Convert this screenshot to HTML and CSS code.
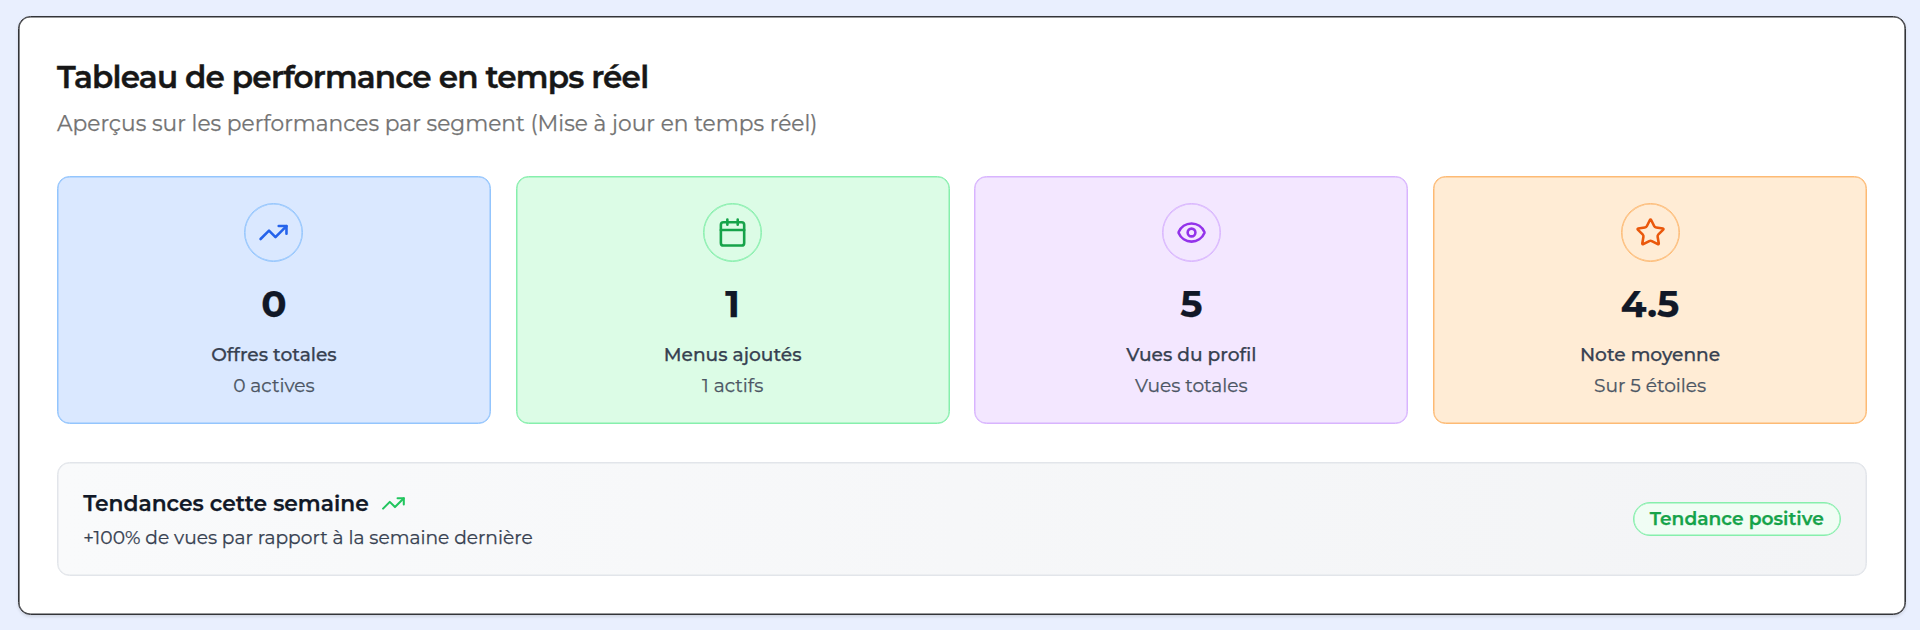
FILE: index.html
```
<!DOCTYPE html>
<html lang="fr">
<head>
<meta charset="utf-8">
<title>Tableau de performance</title>
<link rel="stylesheet" href="styles.css">
</head>
<body>
<main class="panel">
  <header class="panel-header">
    <h1 class="panel-title">Tableau de performance en temps réel</h1>
    <p class="panel-subtitle">Aperçus sur les performances par segment (Mise à jour en temps réel)</p>
  </header>

  <section class="stats">
    <article class="stat stat-blue">
      <span class="stat-icon">
        <svg class="icon" viewBox="0 0 24 24"><polyline points="22 7 13.5 15.5 8.5 10.5 2 17"/><polyline points="16 7 22 7 22 13"/></svg>
      </span>
      <strong class="stat-value">0</strong>
      <span class="stat-label">Offres totales</span>
      <span class="stat-note">0 actives</span>
    </article>
    <article class="stat stat-green">
      <span class="stat-icon">
        <svg class="icon" viewBox="0 0 24 24"><path d="M8 2v4M16 2v4"/><rect x="3" y="4" width="18" height="18" rx="2"/><path d="M3 10h18"/></svg>
      </span>
      <strong class="stat-value">1</strong>
      <span class="stat-label">Menus ajoutés</span>
      <span class="stat-note">1 actifs</span>
    </article>
    <article class="stat stat-purple">
      <span class="stat-icon">
        <svg class="icon" viewBox="0 0 24 24"><path d="M2.062 12.348a1 1 0 0 1 0-.696 10.75 10.75 0 0 1 19.876 0 1 1 0 0 1 0 .696 10.75 10.75 0 0 1-19.876 0"/><circle cx="12" cy="12" r="3"/></svg>
      </span>
      <strong class="stat-value">5</strong>
      <span class="stat-label">Vues du profil</span>
      <span class="stat-note">Vues totales</span>
    </article>
    <article class="stat stat-orange">
      <span class="stat-icon">
        <svg class="icon" viewBox="0 0 24 24"><path d="M11.525 2.295a.53.53 0 0 1 .95 0l2.31 4.679a2.123 2.123 0 0 0 1.595 1.16l5.166.756a.53.53 0 0 1 .294.904l-3.736 3.638a2.123 2.123 0 0 0-.611 1.878l.882 5.14a.53.53 0 0 1-.771.56l-4.618-2.428a2.122 2.122 0 0 0-1.973 0L6.396 21.01a.53.53 0 0 1-.77-.56l.881-5.139a2.122 2.122 0 0 0-.611-1.879L2.16 9.795a.53.53 0 0 1 .294-.906l5.165-.755a2.122 2.122 0 0 0 1.597-1.16z"/></svg>
      </span>
      <strong class="stat-value">4.5</strong>
      <span class="stat-label">Note moyenne</span>
      <span class="stat-note">Sur 5 étoiles</span>
    </article>
  </section>

  <section class="trend">
    <div class="trend-text">
      <h2 class="trend-title">Tendances cette semaine
        <svg class="icon icon-small" viewBox="0 0 24 24"><polyline points="22 7 13.5 15.5 8.5 10.5 2 17"/><polyline points="16 7 22 7 22 13"/></svg>
      </h2>
      <p class="trend-note">+100% de vues par rapport à la semaine dernière</p>
    </div>
    <span class="badge">Tendance positive</span>
  </section>
</main>
</body>
</html>
```
FILE: styles.css
```
* { box-sizing: border-box; margin: 0; }

body {
  height: 630px;
  padding: 16px 14px 15px 18px;
  overflow: hidden;
  background: #e9effe;
  font-family: Montserrat, Inter, sans-serif;
  -webkit-text-stroke: 0.25px currentColor;
}

.panel {
  height: 599px;
  padding: 38px 38px 0;
  border: 1px solid #333438;
  border-radius: 12.4px;
  background: #fff;
  box-shadow: inset 0 0 0 0.6px #333438, 0 1.5px 3px rgba(0, 0, 0, 0.1);
}

.panel-title {
  line-height: 44px;
  font-size: 31.07px;
  font-weight: 600;
  letter-spacing: -0.8px;
  color: #171717;
  -webkit-text-stroke-width: 0.4px;
}

.panel-subtitle {
  margin-top: 8px;
  line-height: 33px;
  font-size: 21.73px;
  color: #737373;
}

.stats {
  display: grid;
  grid-template-columns: repeat(4, 1fr);
  gap: 24.86px;
  margin-top: 36px;
}

.stat {
  display: flex;
  flex-direction: column;
  align-items: center;
  height: 248px;
  padding-top: 25.6px;
  border: 1px solid var(--line);
  border-radius: 12.4px;
  background: var(--fill);
  box-shadow: inset 0 0 0 0.5px var(--line);
}

.stat-blue { --fill: #dae8ff; --line: #93c5fd; --ink: #2563eb; }
.stat-green { --fill: #dcfce6; --line: #86efac; --ink: #16a34a; }
.stat-purple { --fill: #f3e7ff; --line: #d8b4fe; --ink: #9333ea; }
.stat-orange { --fill: #ffecd5; --line: #fdba74; --ink: #ea580c; }

.stat-icon {
  display: grid;
  place-items: center;
  width: 59px;
  height: 59px;
  border: 1px solid var(--line);
  border-radius: 50%;
  box-shadow: inset 0 0 0 0.5px var(--line);
  color: var(--ink);
}

.icon {
  display: block;
  width: 31.07px;
  height: 31.07px;
  fill: none;
  stroke: currentColor;
  stroke-width: 2;
  stroke-linecap: round;
  stroke-linejoin: round;
}

.stat-value {
  margin-top: 19.4px;
  line-height: 46px;
  font-size: 37.3px;
  font-weight: 700;
  color: #111827;
}

.stat-label {
  margin-top: 13.4px;
  line-height: 30px;
  font-size: 18.64px;
  font-weight: 500;
  color: #374151;
}

.stat-note {
  line-height: 31px;
  font-size: 18.64px;
  color: #4b5563;
}

.trend {
  display: flex;
  align-items: center;
  justify-content: space-between;
  height: 114.4px;
  margin-top: 37.6px;
  padding: 0 25.2px;
  border: 1px solid #e2e5ea;
  border-radius: 12.4px;
  background: linear-gradient(90deg, #f9fafb, #f3f4f6);
  box-shadow: inset 0 0 0 0.5px #e2e5ea;
}

.trend-text {
  padding-top: 4px;
}

.trend-title {
  display: flex;
  align-items: center;
  gap: 12.4px;
  line-height: 34px;
  font-size: 21.75px;
  font-weight: 600;
  color: #111827;
}

.icon-small {
  width: 24.86px;
  height: 24.86px;
  color: #22c55e;
}

.trend-note {
  line-height: 35px;
  font-size: 18.64px;
  color: #374151;
}

.badge {
  height: 34px;
  padding: 0 16px;
  border: 1px solid #86efac;
  border-radius: 17px;
  background: #f0fdf4;
  box-shadow: inset 0 0 0 0.5px #86efac;
  line-height: 32px;
  font-size: 18.64px;
  font-weight: 600;
  color: #16a34a;
}
```
